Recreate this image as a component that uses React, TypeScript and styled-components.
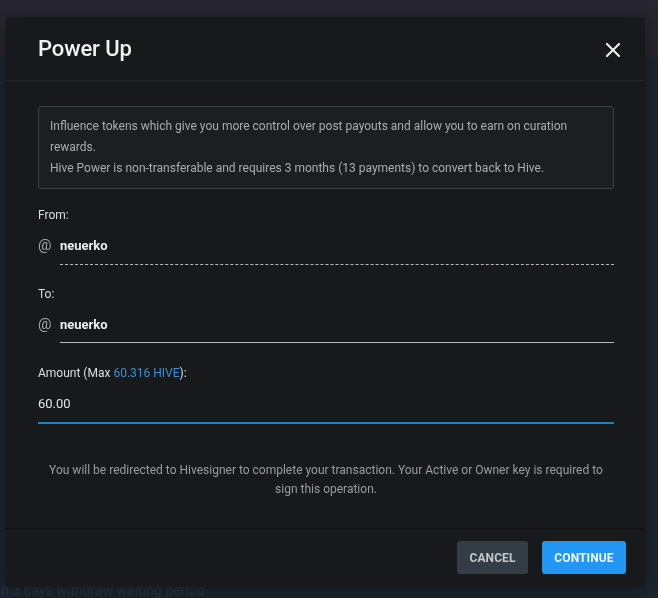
import React from "react";
import styled, { createGlobalStyle } from "styled-components";

const Global = createGlobalStyle`
  html, body { margin: 0; padding: 0; background: #1c2630; }
  body { font-family: Roboto, "Noto Sans", "Liberation Sans", sans-serif; }
  * { box-sizing: border-box; }
`;

const Page = styled.div`
  width: 658px;
  height: 598px;
  display: flex;
  flex-direction: column;
  overflow: hidden;
`;

const TopBar = styled.div`
  height: 57px;
  background: #27252f;
`;

const PageBody = styled.div`
  flex: 1;
  background: #1c2630;
  display: flex;
  flex-direction: column;
  justify-content: flex-end;
  padding: 0 0 1px 1px;
`;

const FaintText = styled.div`
  font-size: 14px;
  color: #2b3641;
  line-height: 13px;
`;

const Overlay = styled.div`
  position: fixed;
  inset: 0;
  padding: 17px 0 0 6px;
`;

const Modal = styled.div`
  width: 639px;
  height: 570px;
  background: #18191b;
  border-radius: 2px;
  display: flex;
  flex-direction: column;
  box-shadow: 0 4px 20px rgba(0, 0, 0, 0.4);
`;

const Header = styled.div`
  height: 64px;
  flex-shrink: 0;
  display: flex;
  align-items: center;
  justify-content: space-between;
  padding: 0 21px 0 32px;
  border-bottom: 1px solid #232427;
`;

const Title = styled.h2`
  margin: 0;
  font-size: 22px;
  font-weight: 500;
  color: #f2f2f2;
  letter-spacing: -0.1px;
`;

const CloseButton = styled.button`
  width: 22px;
  height: 22px;
  padding: 0;
  border: none;
  background: transparent;
  display: flex;
  align-items: center;
  justify-content: center;
  margin-top: 2px;
`;

const Body = styled.div`
  flex: 1;
  padding: 25px 31px 0 32px;
  display: flex;
  flex-direction: column;
`;

const InfoBox = styled.div`
  border: 1px solid #3b4045;
  background: #1c1f22;
  border-radius: 3px;
  padding: 9px 11px;
  font-size: 12px;
  line-height: 21px;
  color: #a9adb0;
`;

const Label = styled.div<{ $top: number }>`
  margin-top: ${(p) => p.$top}px;
  font-size: 12px;
  line-height: 14px;
  color: #dedede;
`;

const Accent = styled.span`
  color: #3a8fd8;
`;

const AccountRow = styled.div<{ $top: number }>`
  margin-top: ${(p) => p.$top}px;
  display: flex;
  align-items: center;
  height: 18px;
`;

const At = styled.span`
  width: 22px;
  font-size: 15px;
  color: #a8a8a8;
  line-height: 18px;
`;

const Account = styled.span`
  font-size: 13px;
  font-weight: 700;
  color: #ececec;
`;

const Underline = styled.div<{ $dashed?: boolean }>`
  margin: ${(p) => (p.$dashed ? 10 : 9)}px 0 0 22px;
  height: 0;
  border-bottom: 1px ${(p) => (p.$dashed ? "dashed" : "solid")} #b8b8b8;
`;

const AmountValue = styled.div`
  margin-top: 16px;
  font-size: 13px;
  line-height: 16px;
  color: #e4e4e4;
`;

const AmountLine = styled.div`
  margin-top: 10px;
  height: 2px;
  background: #1f7fc0;
`;

const Note = styled.p`
  margin: 37px 0 0;
  text-align: center;
  font-size: 12px;
  line-height: 19px;
  color: #9c9c9c;
`;

const Footer = styled.div`
  height: 59px;
  flex-shrink: 0;
  border-top: 1px solid #0e0f10;
  display: flex;
  align-items: center;
  justify-content: flex-end;
  gap: 14px;
  padding: 0 19px 1px 0;
`;

const Button = styled.button<{ $primary?: boolean }>`
  height: 33px;
  width: ${(p) => (p.$primary ? 84 : 71)}px;
  padding: 0;
  border: none;
  border-radius: 3px;
  font-family: Roboto, "Liberation Sans", sans-serif;
  font-size: 12px;
  font-weight: 700;
  letter-spacing: 0.1px;
  text-transform: uppercase;
  background: ${(p) => (p.$primary ? "#2196f3" : "#343d45")};
  color: ${(p) => (p.$primary ? "#f4f9ff" : "#c3c8cc")};
`;

export default function App() {
  return (
    <>
      <Global />
      <Page>
        <TopBar />
        <PageBody>
          <FaintText>n 3 days withdraw waiting period</FaintText>
        </PageBody>
      </Page>
      <Overlay>
        <Modal>
          <Header>
            <Title>Power Up</Title>
            <CloseButton aria-label="close">
              <svg width="14" height="14" viewBox="0 0 14 14">
                <path d="M1 1 L13 13 M13 1 L1 13" stroke="#f4f4f4" strokeWidth="2" strokeLinecap="square" />
              </svg>
            </CloseButton>
          </Header>
          <Body>
            <InfoBox>
              Influence tokens which give you more control over post payouts and allow you to earn on curation rewards.
              <br />
              Hive Power is non-transferable and requires 3 months (13 payments) to convert back to Hive.
            </InfoBox>
            <Label $top={19}>From:</Label>
            <AccountRow $top={14}>
              <At>@</At>
              <Account>neuerko</Account>
            </AccountRow>
            <Underline $dashed />
            <Label $top={22}>To:</Label>
            <AccountRow $top={14}>
              <At>@</At>
              <Account>neuerko</Account>
            </AccountRow>
            <Underline />
            <Label $top={23}>
              Amount (Max <Accent>60.316 HIVE</Accent>):
            </Label>
            <AmountValue>60.00</AmountValue>
            <AmountLine />
            <Note>
              You will be redirected to Hivesigner to complete your transaction. Your Active or Owner key is required to sign this operation.
            </Note>
          </Body>
          <Footer>
            <Button>Cancel</Button>
            <Button $primary>Continue</Button>
          </Footer>
        </Modal>
      </Overlay>
    </>
  );
}
